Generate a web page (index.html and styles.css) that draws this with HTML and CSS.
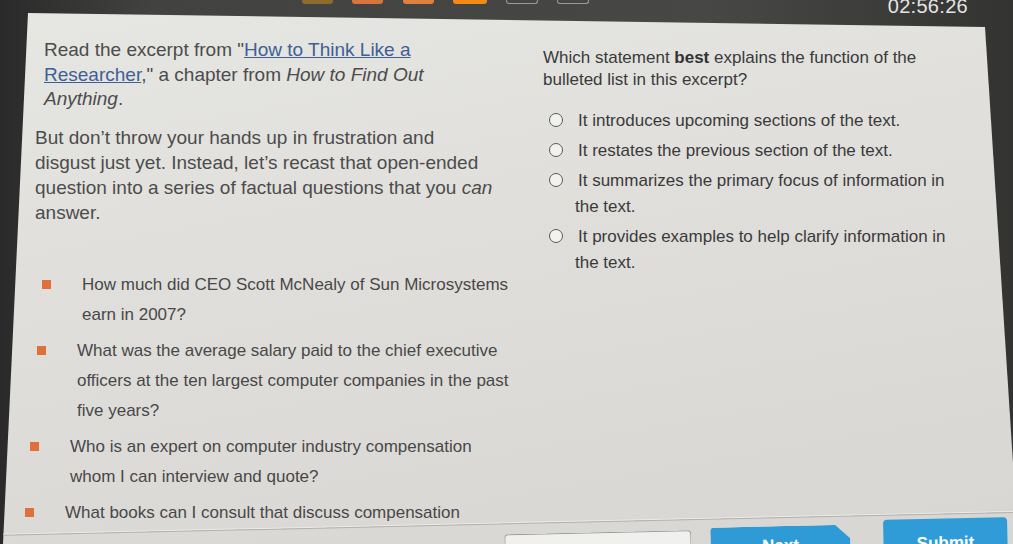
FILE: index.html
```html
<!DOCTYPE html>
<html lang="en">
<head>
<meta charset="utf-8">
<title>Question</title>
<link rel="stylesheet" href="styles.css">
</head>
<body>
<div class="screen">
  <div class="topbar">
    <div class="tabs">
      <span class="tab tab-a"></span>
      <span class="tab tab-b"></span>
      <span class="tab tab-c"></span>
      <span class="tab tab-d"></span>
      <span class="tab tab-empty"></span>
      <span class="tab tab-empty"></span>
    </div>
    <div class="timer">02:56:26</div>
  </div>
  <div class="panel">
    <div class="content">
      <div class="passage">
        <p class="intro">Read the excerpt from "<a class="link" href="#">How to Think Like a<br>Researcher</a>," a chapter from <em>How to Find Out<br>Anything</em>.</p>
        <p class="body-text">But don’t throw your hands up in frustration and<br>disgust just yet. Instead, let’s recast that open-ended<br>question into a series of factual questions that you <em>can</em><br>answer.</p>
        <ul class="bullets">
          <li class="b1">How much did CEO Scott McNealy of Sun Microsystems<br>earn in 2007?</li>
          <li class="b2">What was the average salary paid to the chief executive<br>officers at the ten largest computer companies in the past<br>five years?</li>
          <li class="b3">Who is an expert on computer industry compensation<br>whom I can interview and quote?</li>
          <li class="b4">What books can I consult that discuss compensation</li>
        </ul>
      </div>
      <div class="question">
        <p class="prompt">Which statement <b>best</b> explains the function of the<br>bulleted list in this excerpt?</p>
        <div class="options">
          <div class="opt"><span class="radio"></span>It introduces upcoming sections of the text.</div>
          <div class="opt"><span class="radio"></span>It restates the previous section of the text.</div>
          <div class="opt"><span class="radio"></span>It summarizes the primary focus of information in<br>the text.</div>
          <div class="opt"><span class="radio"></span>It provides examples to help clarify information in<br>the text.</div>
        </div>
      </div>
    </div>
    <div class="footer">
      <span class="btn btn-blank"></span>
      <span class="btn btn-next">Next</span>
      <span class="btn btn-submit">Submit</span>
    </div>
  </div>
</div>
</body>
</html>
```
FILE: styles.css
```css
html, body {
  margin: 0;
  padding: 0;
}
body {
  width: 1013px;
  height: 544px;
  overflow: hidden;
  background: #3b3b3a;
  font-family: "Liberation Sans", Arial, sans-serif;
}
.screen {
  height: 544px;
  display: flex;
  flex-direction: column;
  background: linear-gradient(90deg, #2a2a2a 0%, #424240 15%, #474745 70%, #333332 100%);
}
.topbar {
  height: 13px;
  flex: none;
  display: flex;
  align-items: flex-start;
  position: relative;
  z-index: 2;
}
.tabs {
  display: flex;
  gap: 19px;
  margin-left: 302px;
}
.tab {
  display: block;
  width: 31px;
  height: 4px;
  border-radius: 0 0 3px 3px;
}
.tab-a { background: #8c6a30; }
.tab-b { background: #d6763c; }
.tab-c { background: #e0803e; margin-left: 1px; }
.tab-d { background: #f28a16; width: 34px; }
.tab-empty {
  height: 3px;
  border: 1px solid #9a9a98;
  border-top: none;
  width: 30px;
}
.timer {
  margin-left: auto;
  margin-right: 45px;
  font-size: 20px;
  line-height: 13px;
  color: #e4e4e2;
  letter-spacing: 0.3px;
}
.panel {
  flex: 1;
  min-height: 0;
  display: flex;
  flex-direction: column;
  background: linear-gradient(170deg, #e6e6e2 0%, #dfdedb 45%, #d8d6d2 100%);
  clip-path: polygon(28px 0, 985px 14px, 1013px 450px, 1013px 100%, 3px 100%);
}
.content {
  flex: 1 1 0;
  min-height: 0;
  display: grid;
  grid-template-columns: 490px 1fr;
  column-gap: 8px;
  padding: 25px 0 0 45px;
}
.passage {
  color: #4c4c4c;
}
.passage p {
  margin: 0;
  font-size: 19px;
}
.passage .intro {
  line-height: 24.5px;
  margin-left: -1px;
}
.passage .body-text {
  margin-top: 13px;
  margin-left: -10px;
  line-height: 25.3px;
}
.link {
  color: #3f5f95;
  text-decoration: underline;
}
.bullets {
  list-style: none;
  margin: 44px 0 0;
  padding: 0;
  font-size: 17px;
  line-height: 30px;
  color: #484848;
  white-space: nowrap;
}
.bullets li {
  margin-bottom: 6px;
  padding-left: 37px;
}
.bullets .b2 { margin-left: -5px; }
.bullets .b3 { margin-left: -12px; }
.bullets .b4 { margin-left: -17px; }
.bullets li::before {
  content: "";
  display: inline-block;
  width: 9px;
  height: 9px;
  background: #e0703a;
  margin-left: -40px;
  margin-right: 31px;
  vertical-align: 1px;
}
.question {
  padding-top: 9px;
  color: #3a3a3a;
  font-size: 17px;
}
.prompt {
  margin: 0;
  line-height: 22px;
}
.prompt b {
  font-weight: bold;
  color: #333;
}
.options {
  margin-top: 17px;
  display: flex;
  flex-direction: column;
  gap: 4px;
}
.opt {
  padding-left: 32px;
  line-height: 26px;
}
.radio {
  display: inline-block;
  width: 12px;
  height: 12px;
  border: 1.6px solid #5a5a5a;
  border-radius: 50%;
  background: #f2f2f0;
  margin-left: -26px;
  margin-right: 15px;
  vertical-align: -1px;
}
.footer {
  flex: none;
  position: relative;
  z-index: 1;
  height: 19px;
  display: flex;
  align-items: flex-start;
  padding-left: 504px;
  border-top: 1px solid #b3b1ad;
  box-shadow: 0 -1px 0 #ecebe8;
  transform: rotate(-1.3deg);
  transform-origin: 480px 0;
}
.btn {
  display: block;
  flex: none;
  height: 40px;
  border-radius: 4px 4px 0 0;
  font-size: 17px;
  font-weight: bold;
  color: #fff;
  text-align: center;
}
.btn-blank {
  width: 187px;
  margin-top: 10px;
  background: #f0f0ee;
  border: 1px solid #9c9a96;
  border-bottom: none;
  box-sizing: border-box;
}
.btn-next {
  width: 140px;
  margin-left: 19px;
  margin-top: 8px;
  background: #2e9ad6;
  clip-path: polygon(0 0, 125px 0, 140px 14px, 140px 100%, 0 100%);
  line-height: 40px;
}
.btn-submit {
  width: 124px;
  margin-left: 33px;
  margin-top: 4px;
  background: #2f9cd8;
  line-height: 49px;
}
```
